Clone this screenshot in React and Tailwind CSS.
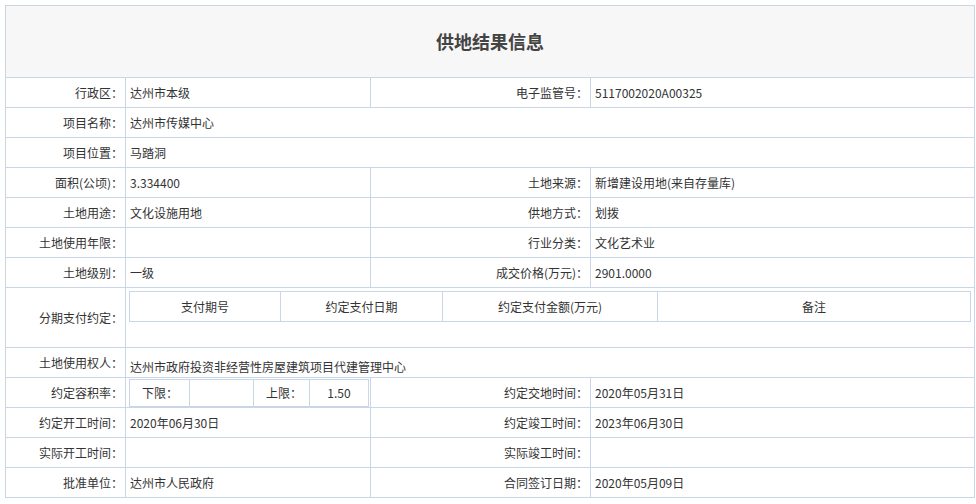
const F = { fontFamily: '"Noto Sans CJK SC", "DejaVu Sans", sans-serif' };

const L = ({ children, className = '' }) => (
  <td className={`border border-[#c8d6e8] text-right pr-0.5 text-[12px] text-[#333] ${className}`}>{children}</td>
);
const V = ({ children, colSpan, className = '' }) => (
  <td colSpan={colSpan} className={`border border-[#c8d6e8] pl-1 text-[12px] text-[#333] ${className}`}>{children}</td>
);

export default function App() {
  const rows = [
    ['行政区：', '达州市本级', '电子监管号：', '5117002020A00325'],
    ['项目名称：', '达州市传媒中心'],
    ['项目位置：', '马踏洞'],
    ['面积(公顷)：', '3.334400', '土地来源：', '新增建设用地(来自存量库)'],
    ['土地用途：', '文化设施用地', '供地方式：', '划拨'],
    ['土地使用年限：', '', '行业分类：', '文化艺术业'],
    ['土地级别：', '一级', '成交价格(万元)：', '2901.0000'],
  ];
  const tail = [
    ['约定开工时间：', '2020年06月30日', '约定竣工时间：', '2023年06月30日'],
    ['实际开工时间：', '', '实际竣工时间：', ''],
    ['批准单位：', '达州市人民政府', '合同签订日期：', '2020年05月09日'],
  ];
  return (
    <div className="w-[976px] h-[504px] bg-white pt-[5px] pl-[5px]" style={F}>
      <table className="w-[970px] border-collapse table-fixed">
        <colgroup>
          <col className="w-[120px]" />
          <col className="w-[245px]" />
          <col className="w-[220px]" />
          <col />
        </colgroup>
        <tbody>
          <tr className="h-[72px]">
            <td colSpan={4} className="border border-[#c8d6e8] bg-[#f7f7f7] text-center text-[18px] font-bold text-[#444]">供地结果信息</td>
          </tr>
          {rows.map((r, i) => (
            <tr key={i} className="h-[30px]">
              <L>{r[0]}</L>
              {r.length === 2 ? <V colSpan={3}>{r[1]}</V> : (<><V>{r[1]}</V><L>{r[2]}</L><V>{r[3]}</V></>)}
            </tr>
          ))}
          <tr className="h-[60px]">
            <L>分期支付约定：</L>
            <td colSpan={3} className="border border-[#c8d6e8] align-top pt-[3px] pl-[3px] pr-[3px]">
              <table className="w-full border-collapse table-fixed text-[12px] text-[#333]">
                <colgroup>
                  <col className="w-[151px]" />
                  <col className="w-[162px]" />
                  <col className="w-[215px]" />
                  <col />
                </colgroup>
                <tbody>
                  <tr className="h-[30px]">
                    {['支付期号', '约定支付日期', '约定支付金额(万元)', '备注'].map(t => (
                      <td key={t} className="border border-[#c8d6e8] text-center">{t}</td>
                    ))}
                  </tr>
                </tbody>
              </table>
            </td>
          </tr>
          <tr className="h-[30px]">
            <L>土地使用权人：</L>
            <V colSpan={3} className="pt-2">达州市政府投资非经营性房屋建筑项目代建管理中心</V>
          </tr>
          <tr className="h-[30px]">
            <L>约定容积率：</L>
            <td className="border border-[#c8d6e8] pl-[3px] py-0">
              <div className="flex h-[28px] w-[240px] border border-[#c8d6e8] text-[12px] text-[#333]">
                <div className="w-[60px] flex items-center pl-3 border-r border-[#c8d6e8]">下限：</div>
                <div className="w-[64px] border-r border-[#c8d6e8]"></div>
                <div className="w-[56px] flex items-center pl-3 border-r border-[#c8d6e8]">上限：</div>
                <div className="flex-1 flex items-center justify-center">1.50</div>
              </div>
            </td>
            <L>约定交地时间：</L>
            <V>2020年05月31日</V>
          </tr>
          {tail.map((r, i) => (
            <tr key={i} className="h-[30px]">
              <L>{r[0]}</L><V>{r[1]}</V><L>{r[2]}</L><V>{r[3]}</V>
            </tr>
          ))}
        </tbody>
      </table>
    </div>
  );
}
